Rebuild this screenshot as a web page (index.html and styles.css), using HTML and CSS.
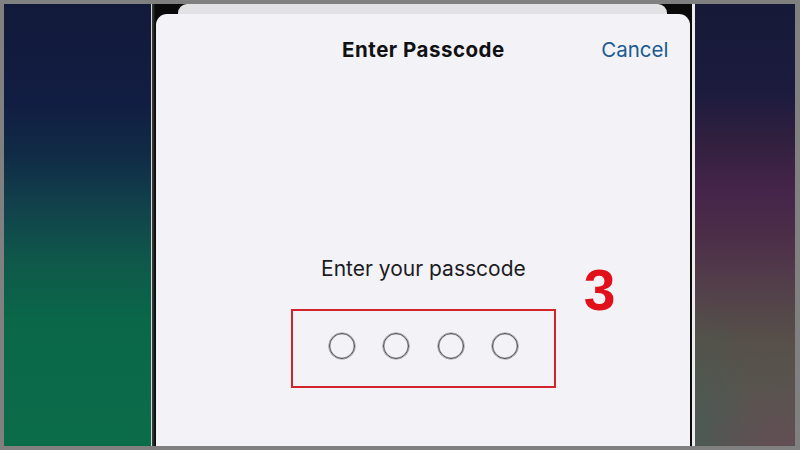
FILE: index.html
```html
<!DOCTYPE html>
<html lang="en">
<head>
<meta charset="utf-8">
<title>Enter Passcode</title>
<link rel="stylesheet" href="styles.css">
</head>
<body>
<div class="frame">
  <div class="bg bg-left"></div>
  <div class="phone">
    <div class="back-sheet"></div>
    <div class="card">
      <div class="header">
        <span></span>
        <h1 class="title">Enter Passcode</h1>
        <span class="cancel">Cancel</span>
      </div>
      <div class="body">
        <p class="prompt">Enter your passcode</p>
        <div class="dots-box">
          <span class="dot"></span>
          <span class="dot"></span>
          <span class="dot"></span>
          <span class="dot"></span>
          <span class="step">3</span>
        </div>
      </div>
    </div>
  </div>
  <div class="bg bg-right"></div>
</div>
</body>
</html>
```

FILE: styles.css
```css
html, body {
  margin: 0;
  padding: 0;
}
body {
  width: 800px;
  height: 450px;
  background: #808080;
  overflow: hidden;
  font-family: Inter, "Liberation Sans", sans-serif;
}
.frame {
  display: flex;
  height: 442px;
  margin: 4px 5px 4px 4px;
}
.bg-left {
  width: 148px;
  background: linear-gradient(180deg, #121a3a 0%, #111d42 22%, #102b46 34%, #11424b 46%, #0f584a 58%, #0a6848 72%, #0b6c4a 100%);
}
.bg-right {
  width: 100px;
  background:
    radial-gradient(ellipse 90px 70px at 100% 100%, rgba(110, 70, 90, 0.45), rgba(110, 70, 90, 0) 100%),
    radial-gradient(ellipse 60px 160px at 0% 100%, rgba(60, 95, 88, 0.45), rgba(60, 95, 88, 0) 100%),
    linear-gradient(180deg, #161a38 0%, #1c1b3e 20%, #33203f 32%, #45254a 42%, #4b2d48 52%, #523c4a 62%, #565049 76%, #58554f 90%, #5a5451 100%);
}
.phone {
  width: 536px;
  display: flex;
  flex-direction: column;
  background: #0a0a0a;
  border-left: 1px solid #d4d6d8;
  border-right: 3px solid #ececec;
  padding: 0 2px 0 4px;
  box-shadow: inset 4px 0 2px -2px #3a3a3a;
}
.back-sheet {
  height: 10px;
  margin: 0 23px 0 22px;
  background: #e2e2e5;
  border-radius: 9px 9px 0 0;
}
.card {
  flex: 1;
  background: #f2f2f7;
  border-radius: 11px 11px 0 0;
  display: flex;
  flex-direction: column;
}
.header {
  display: grid;
  grid-template-columns: 1fr auto 1fr;
  align-items: center;
  padding-top: 24px;
}
.title {
  margin: 0;
  font-size: 20.5px;
  line-height: 24px;
  font-weight: 700;
  letter-spacing: 0.5px;
  color: #111113;
}
.cancel {
  justify-self: end;
  padding-right: 22px;
  font-size: 20.5px;
  line-height: 24px;
  color: #1b5a93;
}
.body {
  display: flex;
  flex-direction: column;
  align-items: center;
  padding-top: 194px;
}
.prompt {
  margin: 0;
  font-size: 21px;
  line-height: 25px;
  color: #1c1c1e;
}
.dots-box {
  position: relative;
  margin-top: 28px;
  display: flex;
  gap: 28.3px;
  padding: 22px 36px 27px;
  border: 2px solid #d3232c;
}
.dot {
  flex: none;
  box-sizing: border-box;
  width: 26px;
  height: 26px;
  border: 1px solid #4e4e52;
  box-shadow: 0 0 0 0.6px rgba(80, 80, 85, 0.55), inset 0 0 0 0.6px rgba(80, 80, 85, 0.45);
  border-radius: 50%;
}
.step {
  position: absolute;
  left: calc(100% + 30px);
  top: -49px;
  font-family: "Liberation Sans", Arial, sans-serif;
  font-weight: 700;
  font-size: 57px;
  line-height: 57px;
  color: #e1111b;
}
```
